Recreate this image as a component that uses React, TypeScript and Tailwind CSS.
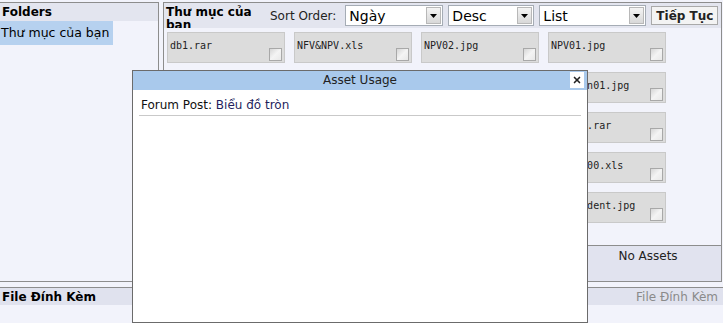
import { X } from 'lucide-react';

const assets = [
  'db1.rar', 'NFV&NPV.xls', 'NPV02.jpg', 'NPV01.jpg',
  'hinh01.jpg', 'bieudo.jpg', 'tron.jpg', 'Bieudon01.jpg',
  'data.rar', 'bang.xls', 'thu.rar', 'backup.rar',
  'so1.xls', 'so2.xls', 'bao.jpg', 'bang2000.xls',
  'a1.jpg', 'a2.jpg', 'a3.jpg', 'my_student.jpg',
];

function Select({ label, width }: { label: string; width: string }) {
  return (
    <div className={`${width} h-[21px] bg-white border border-[#a5acb5] flex items-center`}>
      <span className="pl-[3px] text-[14px] leading-none text-black">{label}</span>
      <div className="ml-auto mr-[1px] w-[15px] h-[17px] bg-gradient-to-b from-[#f4f4f4] to-[#d8d8d8] border border-[#b8b8b8] flex items-center justify-center">
        <svg width="7" height="4" viewBox="0 0 7 4">
          <path d="M0 0h7L3.5 4z" fill="#000" />
        </svg>
      </div>
    </div>
  );
}

function Tile({ name }: { name: string }) {
  return (
    <div className="relative h-[31px] bg-[#dcdcdc] border border-[#c9c9c9]">
      <span className="absolute left-[2px] top-[8px] font-['DejaVu_Sans_Mono'] text-[10px] leading-none text-[#222] whitespace-nowrap">
        {name}
      </span>
      <div className="absolute right-[2px] bottom-[1px] w-[13px] h-[13px] border border-[#a8a8a8] bg-gradient-to-br from-[#d6d6d6] via-[#f4f4f4] to-[#e8e8e8]" />
    </div>
  );
}

export default function App() {
  return (
    <div className="relative w-[723px] h-[323px] overflow-hidden bg-[#f2f3fb] font-['DejaVu_Sans',sans-serif] text-black">
      {/* Top area */}
      <div className="flex h-[282px] pt-[2px]">
        {/* Folders */}
        <div className="w-[159px] border-t border-r border-b border-[#8d8d8d] flex flex-col">
          <div className="h-[18px] bg-[#e3e5ef] px-[2px] text-[12px] font-bold leading-[18px]">Folders</div>
          <div className="w-[113px] h-[24px] bg-[#b6d1ef] pl-[1px] text-[12.5px] leading-[24px] whitespace-nowrap">Thư mục của bạn</div>
        </div>
        <div className="w-[4px]" />
        {/* Assets */}
        <div className="w-[559px] border border-[#8d8d8d] flex flex-col">
          <div className="h-[25px] bg-[#e3e5ef] flex items-center pl-[2px] overflow-hidden">
            <div className="w-[104px] self-start pt-[3px] text-[12px] font-bold leading-[13px]">Thư mục của bạn</div>
            <span className="text-[12px] text-[#222]">Sort Order:</span>
            <div className="ml-[9px] flex gap-[5px] items-center">
              <Select label="Ngày" width="w-[98px]" />
              <Select label="Desc" width="w-[86px]" />
              <Select label="List" width="w-[107px]" />
              <button className="w-[67px] h-[19px] bg-[#f3f3f3] border border-[#a9a9a9] text-[12px] font-bold leading-none text-[#222]">
                Tiếp Tục
              </button>
            </div>
          </div>
          <div className="flex-1 pl-[3px] pt-[4px] overflow-hidden">
            <div className="grid grid-cols-[118px_118px_118px_118px] gap-x-[9px] gap-y-[9px]">
              {assets.map((a) => (
                <Tile key={a} name={a} />
              ))}
            </div>
          </div>
          <div className="h-[36px] border-t border-[#8d8d8d] bg-[#e1e3ef] flex justify-end">
            <div className="w-[146px] text-center text-[12px] leading-[20px] text-[#222]">No Assets</div>
          </div>
        </div>
      </div>

      {/* Footer */}
      <div className="mt-[5px] border-t border-[#8d8d8d] h-[18px] bg-[#e0e2ee] flex items-center justify-between px-[2px]">
        <span className="text-[12px] font-bold">File Đính Kèm</span>
        <span className="text-[12px] text-[#8a8a8a] pr-[3px]">File Đính Kèm</span>
      </div>

      {/* Asset Usage dialog */}
      <div className="absolute left-[132px] top-[70px] w-[456px] h-[253px] bg-white border border-[#6b6b6b]">
        <div className="relative h-[19px] bg-[#a9c9ec] text-center text-[12px] leading-[19px] text-[#222]">
          Asset Usage
          <div className="absolute right-[3px] top-[1px] w-[14px] h-[16px] bg-white flex items-center justify-center">
            <X className="w-[10px] h-[10px]" strokeWidth={4} />
          </div>
        </div>
        <div className="px-[8px] pt-[8px] text-[12px] leading-[14px] text-[#111]">
          Forum Post: <span className="text-[#1f1f5e]">Biểu đồ tròn</span>
        </div>
        <div className="mx-[6px] mt-[3px] border-b border-[#c9c9c9]" />
      </div>
    </div>
  );
}
